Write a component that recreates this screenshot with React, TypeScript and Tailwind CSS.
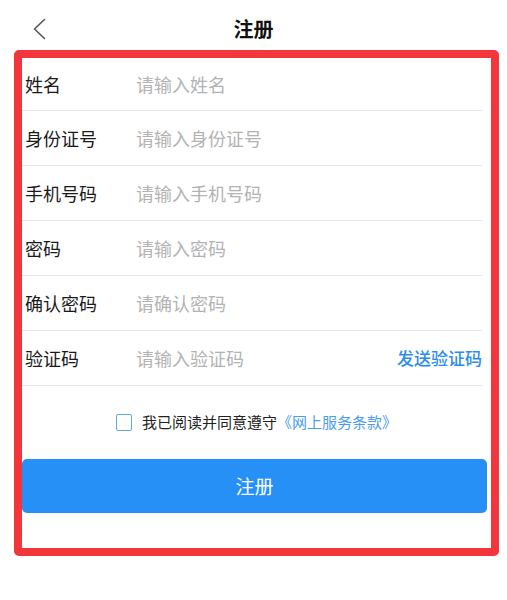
import React from "react";

const rows: { label: string; placeholder: string; extra?: string }[] = [
  { label: "姓名", placeholder: "请输入姓名" },
  { label: "身份证号", placeholder: "请输入身份证号" },
  { label: "手机号码", placeholder: "请输入手机号码" },
  { label: "密码", placeholder: "请输入密码" },
  { label: "确认密码", placeholder: "请确认密码" },
  { label: "验证码", placeholder: "请输入验证码", extra: "发送验证码" },
];

export default function App() {
  return (
    <div
      className="w-[507px] h-[600px] bg-white overflow-hidden"
      style={{ fontFamily: '"Noto Sans CJK SC", "Noto Sans", sans-serif' }}
    >
      <header className="h-[50px] pt-[8px] grid grid-cols-[1fr_auto_1fr] items-center">
        <div className="pl-[33px] flex items-center">
          <svg width="14" height="22" viewBox="0 0 14 22" fill="none">
            <polyline
              points="11.5,1.5 1.5,11 11.5,20.5"
              stroke="#555"
              strokeWidth="1.6"
              strokeLinecap="round"
              strokeLinejoin="round"
            />
          </svg>
        </div>
        <h1 className="text-[20px] font-bold text-[#111] leading-none">注册</h1>
        <div />
      </header>

      <div className="ml-[14px] w-[485px] h-[506px] border-[8px] border-[#f3363b] rounded-[5px] flex flex-col">
        {rows.map((r, i) => (
          <div
            key={r.label}
            className={`${i === 0 ? "h-[53px]" : "h-[55px]"} mr-[9px] pl-[3px] flex items-center border-b border-[#e6e6e6] shrink-0`}
          >
            <span className="w-[111px] shrink-0 text-[18px] text-[#1a1a1a]">{r.label}</span>
            <input
              className="flex-1 min-w-0 bg-transparent outline-none text-[18px] text-[#222] placeholder:text-[#b3b3b3]"
              placeholder={r.placeholder}
            />
            {r.extra && (
              <span className="text-[17px] font-medium text-[#2e8ce9] shrink-0">{r.extra}</span>
            )}
          </div>
        ))}

        <div className="h-[73px] shrink-0 flex items-center justify-center">
          <span className="w-[16px] h-[17px] border-[1.5px] border-[#5ea8ea] rounded-[2px] mr-[10px]" />
          <span className="text-[15px] text-[#222]">我已阅读并同意遵守</span>
          <span className="text-[15px] text-[#4b9cf0]">《网上服务条款》</span>
        </div>

        <button className="h-[54px] mr-[4px] shrink-0 bg-[#2690f7] rounded-[5px] text-white text-[19px] flex items-center justify-center">
          注册
        </button>
      </div>
    </div>
  );
}
